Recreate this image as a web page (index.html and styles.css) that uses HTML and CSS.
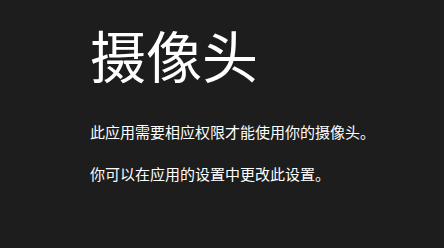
FILE: index.html
```html
<!DOCTYPE html>
<html lang="zh-CN">
<head>
<meta charset="utf-8">
<link rel="stylesheet" href="styles.css">
</head>
<body>
<main class="page">
  <h1 class="title">摄像头</h1>
  <p class="msg">此应用需要相应权限才能使用你的摄像头。</p>
  <p class="msg">你可以在应用的设置中更改此设置。</p>
</main>
</body>
</html>
```
FILE: styles.css
```css
html, body {
  margin: 0;
  padding: 0;
  background: #1d1d1d;
  width: 444px;
  height: 248px;
  overflow: hidden;
}
.page {
  padding: 16px 0 0 90px;
  color: #ffffff;
  font-family: "Noto Sans CJK SC", "Noto Sans", sans-serif;
}
.title {
  margin: 0;
  font-size: 56px;
  font-weight: 400;
  line-height: 76px;
}
.msg {
  margin: 0;
  font-size: 15px;
  line-height: 20px;
}
.title + .msg {
  margin-top: 30px;
}
.msg + .msg {
  margin-top: 22px;
}
```
